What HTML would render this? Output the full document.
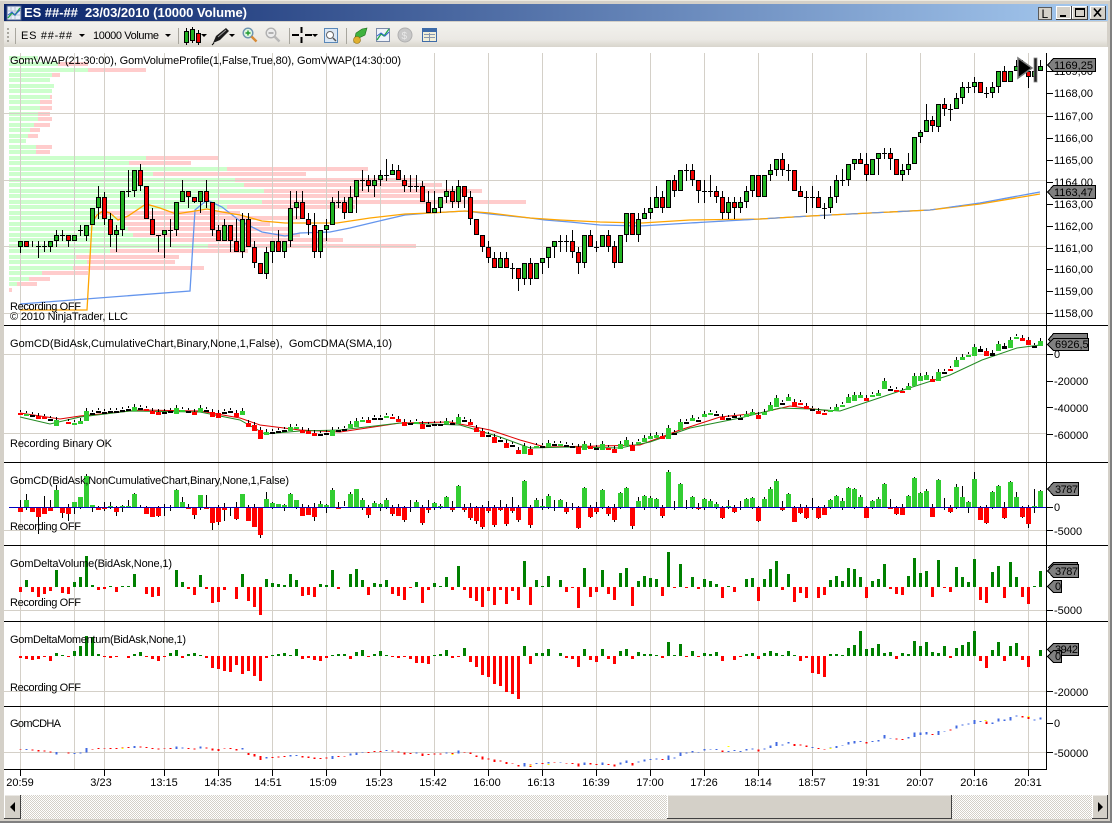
<!DOCTYPE html>
<html><head><meta charset="utf-8"><title>ES ##-## 23/03/2010 (10000 Volume)</title>
<style>
html,body{margin:0;padding:0;background:#D4D0C8;overflow:hidden}
svg{display:block}
text{font-family:"Liberation Sans",sans-serif;font-size:11px;fill:#000}
.c{shape-rendering:crispEdges}
</style></head><body>
<svg width="1112" height="823" viewBox="0 0 1112 823" xmlns="http://www.w3.org/2000/svg">
<defs>
<linearGradient id="tg" x1="0" x2="1" y1="0" y2="0"><stop offset="0" stop-color="#0A246A"/><stop offset="1" stop-color="#A6CAF0"/></linearGradient>
<linearGradient id="tb" x1="0" x2="0" y1="0" y2="1"><stop offset="0" stop-color="#F3F2EE"/><stop offset=".7" stop-color="#EBE9E4"/><stop offset="1" stop-color="#D8D5CC"/></linearGradient>
<pattern id="ht" width="2" height="2" patternUnits="userSpaceOnUse"><rect width="2" height="2" fill="#fff"/><rect width="1" height="1" fill="#D4D0C8"/><rect x="1" y="1" width="1" height="1" fill="#D4D0C8"/></pattern>
<path id="dg" d="M26.5 0v-7M56.5 0v-17M74.5 0v-5M80.5 0v-10M86.5 0v-31M92.5 0v-2M110.5 0v-1M122.5 0v-1M128.5 0v-1M134.5 0v-13M176.5 0v-17M182.5 0v-5M200.5 0v-12M242.5 0v-13M266.5 0v-8M272.5 0v-4M278.5 0v-3M284.5 0v-2M290.5 0v-13M296.5 0v-7M320.5 0v-3M326.5 0v-2M332.5 0v-17M350.5 0v-13M356.5 0v-18M362.5 0v-7M374.5 0v-4M380.5 0v-3M386.5 0v-7M416.5 0v-5M434.5 0v-4M440.5 0v-1M446.5 0v-10M458.5 0v-21M524.5 0v-26M536.5 0v-7M542.5 0v-1M548.5 0v-11M560.5 0v-7M584.5 0v-19M602.5 0v-17M620.5 0v-14M626.5 0v-19M638.5 0v-6M644.5 0v-11M650.5 0v-9M656.5 0v-8M668.5 0v-35M680.5 0v-23M692.5 0v-10M704.5 0v-8M710.5 0v-6M716.5 0v-3M728.5 0v-1M746.5 0v-8M752.5 0v-9M764.5 0v-8M770.5 0v-18M776.5 0v-26M788.5 0v-13M830.5 0v-7M836.5 0v-11M842.5 0v-6M848.5 0v-19M854.5 0v-18M860.5 0v-10M872.5 0v-6M878.5 0v-8M884.5 0v-23M908.5 0v-11M914.5 0v-29M920.5 0v-14M926.5 0v-16M938.5 0v-27M956.5 0v-20M962.5 0v-10M968.5 0v-5M974.5 0v-28M992.5 0v-15M998.5 0v-21M1010.5 0v-25M1016.5 0v-10M1034.5 0v-1M1040.5 0v-16"/>
<path id="dr" d="M20.5 0v5M32.5 0v5M38.5 0v10M44.5 0v7M50.5 0v4M62.5 0v6M68.5 0v7M98.5 0v3M104.5 0v2M116.5 0v5M146.5 0v7M152.5 0v10M158.5 0v9M188.5 0v2M194.5 0v8M206.5 0v2M212.5 0v16M218.5 0v15M224.5 0v3M236.5 0v12M248.5 0v14M254.5 0v20M260.5 0v28M302.5 0v9M308.5 0v8M314.5 0v10M338.5 0v2M368.5 0v8M392.5 0v7M398.5 0v9M404.5 0v13M410.5 0v1M422.5 0v16M428.5 0v3M452.5 0v3M464.5 0v3M470.5 0v11M476.5 0v14M482.5 0v20M488.5 0v4M494.5 0v18M500.5 0v3M506.5 0v17M512.5 0v4M518.5 0v13M530.5 0v18M566.5 0v5M572.5 0v1M578.5 0v21M590.5 0v10M596.5 0v5M608.5 0v7M614.5 0v13M632.5 0v19M662.5 0v9M674.5 0v1M686.5 0v1M698.5 0v2M722.5 0v11M734.5 0v5M758.5 0v14M782.5 0v3M794.5 0v15M800.5 0v6M806.5 0v11M818.5 0v11M824.5 0v8M866.5 0v11M890.5 0v2M896.5 0v7M902.5 0v8M932.5 0v10M944.5 0v1M950.5 0v5M980.5 0v13M986.5 0v16M1004.5 0v11M1022.5 0v10M1028.5 0v17"/>
<path id="cg" d="M26.5 414v2M56.5 420v6M74.5 423v2M80.5 421v3M86.5 411v10M134.5 407v4M176.5 408v6M182.5 410v2M200.5 408v4M242.5 411v4M266.5 432v3M290.5 427v4M296.5 427v2M332.5 430v6M350.5 424v4M356.5 421v6M362.5 420v2M386.5 416v2M416.5 422v2M446.5 421v3M458.5 417v7M524.5 446v8M536.5 446v2M548.5 443v4M560.5 444v2M584.5 444v6M602.5 444v6M620.5 444v5M626.5 440v6M638.5 442v2M644.5 438v4M650.5 436v3M656.5 435v3M668.5 428v11M680.5 422v8M692.5 418v3M704.5 414v3M710.5 413v2M746.5 414v3M752.5 412v3M764.5 412v3M770.5 405v6M776.5 398v9M788.5 397v4M830.5 410v2M836.5 407v4M842.5 405v2M848.5 397v6M854.5 395v6M860.5 395v3M872.5 395v2M878.5 393v3M884.5 381v8M908.5 386v4M914.5 376v10M920.5 376v5M926.5 375v5M938.5 372v9M956.5 360v7M962.5 357v3M968.5 355v2M974.5 347v9M998.5 344v7M1010.5 340v8M1016.5 337v2M1040.5 341v5"/>
<path id="cr" d="M20.5 413v2M38.5 416v3M44.5 417v2M68.5 422v2M146.5 409v2M152.5 411v3M158.5 412v3M194.5 412v3M212.5 412v5M218.5 413v5M236.5 413v4M248.5 423v4M254.5 425v6M260.5 430v9M302.5 430v3M308.5 431v3M314.5 433v3M368.5 420v3M392.5 417v2M398.5 419v3M404.5 422v4M422.5 424v5M470.5 422v3M476.5 428v4M482.5 431v6M494.5 437v6M506.5 443v5M518.5 450v4M530.5 449v6M578.5 447v7M590.5 446v3M608.5 448v2M614.5 449v4M632.5 445v6M662.5 436v3M722.5 417v3M758.5 415v4M794.5 402v5M800.5 403v2M806.5 406v3M818.5 411v3M824.5 413v2M866.5 398v3M896.5 390v2M902.5 391v2M932.5 379v3M950.5 369v2M986.5 351v5M1022.5 338v3M1028.5 340v5"/>
<path id="ck1" d="M32.5 415v2M50.5 419v2M92.5 413v2M98.5 411v2M104.5 412v2M110.5 411v2M116.5 411v2M122.5 410v2M128.5 409v2M140.5 408v2M164.5 412v2M170.5 411v2M188.5 411v2M206.5 410v2M224.5 412v2M230.5 411v2M272.5 432v2M278.5 431v2M284.5 430v2M320.5 434v2M326.5 433v2M338.5 430v2M344.5 429v2M374.5 418v2M380.5 418v2M410.5 423v2M428.5 425v2M434.5 424v2M440.5 424v2M452.5 423v2M464.5 420v2M488.5 435v2M500.5 440v2M512.5 445v2M542.5 446v2M554.5 444v2M566.5 445v2M572.5 446v2M596.5 448v2"/>
<path id="ck2" d="M674.5 433v2M686.5 422v2M698.5 420v2M716.5 414v2M728.5 418v2M734.5 416v2M740.5 418v2M782.5 403v2M812.5 409v2M890.5 389v2M944.5 372v2M980.5 349v3M992.5 353v3M1004.5 346v3M1034.5 346v2"/>
</defs>

<rect width="1112" height="823" fill="#D4D0C8"/>
<rect x="0" y="0" width="1112" height="1" fill="#ECE9E0"/>
<rect x="1110" y="0" width="2" height="823" fill="#808080"/>
<rect x="0" y="821" width="1112" height="2" fill="#808080"/>
<rect x="4" y="4" width="1104" height="17" fill="url(#tg)"/>

<!-- title icon -->
<g class="c"><rect x="7" y="6" width="14" height="14" fill="#E8EEF8" stroke="#4A5E8A"/><path d="M11 7v12M15 7v12M8 11h12M8 15h12" stroke="#B5C0D5"/></g>
<path d="M8 18l4-5 3 2 5-7" fill="none" stroke="#22A84A" stroke-width="1.4"/><path d="M8 15l4-3 3 3 5-5" fill="none" stroke="#3060D0"/>
<text x="24" y="17" xml:space="preserve" textLength="223" lengthAdjust="spacing" style="font-size:13px;font-weight:bold;fill:#fff">ES ##-##  23/03/2010 (10000 Volume)</text>

<!-- window buttons -->
<g class="c">
<rect x="1038.5" y="7.5" width="13" height="12" fill="#D4D0C8" stroke="#5A5A5A"/>
<rect x="1056" y="6" width="15" height="13" fill="#D4D0C8" stroke="#fff" stroke-width="0"/><path d="M1056.5 18.5v-12h14M1070.5 6.5v12h-14" fill="none" stroke="#fff"/><path d="M1071.5 6v13.5h-15.5" fill="none" stroke="#404040"/>
<rect x="1060" y="15" width="6" height="2" fill="#000"/>
<rect x="1072" y="6" width="15" height="13" fill="#D4D0C8"/><path d="M1072.5 18.5v-12h14" fill="none" stroke="#fff"/><path d="M1087.5 6v13.5h-15.5" fill="none" stroke="#404040"/>
<path d="M1075.5 8.5h9v8h-9zM1075 9.5h10" fill="none" stroke="#000"/>
<rect x="1090" y="6" width="15" height="13" fill="#D4D0C8"/><path d="M1090.5 18.5v-12h14" fill="none" stroke="#fff"/><path d="M1105.5 6v13.5h-15.5" fill="none" stroke="#404040"/>
</g>
<path d="M1094 8.5l7 8M1101 8.5l-7 8" stroke="#000" stroke-width="1.7"/>
<text x="1041.5" y="18" style="font-size:12px">L</text>

<!-- toolbar -->
<rect x="4" y="22" width="1103" height="25" fill="url(#tb)"/>
<g fill="#A8A69E" class="c"><rect x="7" y="28" width="2" height="2"/><rect x="7" y="32" width="2" height="2"/><rect x="7" y="36" width="2" height="2"/><rect x="7" y="40" width="2" height="2"/></g>
<path class="c" d="M15.5 28v16M178.5 28v16M289.5 28v16M346.5 28v16" stroke="#A8A69E"/>
<text x="21" y="39" textLength="51" lengthAdjust="spacing">ES ##-##</text>
<path d="M79 34h6l-3 3z" fill="#000"/>
<text x="93" y="39" textLength="66" lengthAdjust="spacing">10000 Volume</text>
<path d="M165 34h6l-3 3z" fill="#000"/>
<g class="c" stroke="#000"><path d="M186.5 28v17M192.5 27v16M198.5 30v15"/><rect x="184.5" y="31.5" width="4" height="11" fill="#20B020"/><rect x="190.5" y="29.5" width="4" height="11" fill="#20B020"/><rect x="196.5" y="33.5" width="4" height="9" fill="#E80000"/></g>
<path d="M201 34h6l-3 3z" fill="#000"/>
<path d="M213 43l3-7 10-8 3 3-9 9z" fill="#1a1a1a"/><path d="M214 43l-2 2" stroke="#000"/><path d="M218 37l8-7" stroke="#999"/>
<path d="M229 34h6l-3 3z" fill="#000"/>
<circle cx="248" cy="33" r="4.8" fill="#DFF5E0" stroke="#6C93B0" stroke-width="1.4"/><path d="M251.500 36.500l5 5" stroke="#D88A35" stroke-width="2.5"/><path d="M245.500 33h5M248 30.500v5" stroke="#1E9A30" stroke-width="1.4"/>
<circle cx="271" cy="33" r="4.8" fill="#ECECEC" stroke="#B0B0B0" stroke-width="1.4"/><path d="M274.500 36.500l5 5" stroke="#B8B8B8" stroke-width="2.5"/><path d="M268.500 33h5" stroke="#999" stroke-width="1.4"/>
<path class="c" d="M292 35h7M305 35h7M301.500 27v6M301.500 37v6" stroke="#000" stroke-width="2"/>
<path d="M312 34h6l-3 3z" fill="#000"/>
<rect x="324.500" y="28.500" width="13" height="14" fill="#DCE8F5" stroke="#5A88B8"/><circle cx="330" cy="35" r="3.500" fill="#fff" stroke="#666"/><path d="M333 38l3 3" stroke="#555" stroke-width="1.500"/>
<path d="M354 42l2-9 6-4 5-1-2 7-6 3z" fill="#3FB23F" stroke="#1E6B1E" stroke-width=".6"/><circle cx="357" cy="40" r="3.500" fill="#E0B030" stroke="#8A6A10" stroke-width=".6"/>
<rect x="376.500" y="28.500" width="13" height="13" fill="#EEF2FA" stroke="#7A8AA8"/><path d="M377 40l4-6 3 2 5-7" fill="none" stroke="#22A84A" stroke-width="1.300"/><path d="M377 36l4-3 4 3 4-4" fill="none" stroke="#3060D0"/>
<circle cx="405" cy="35" r="7" fill="#C8C8C8" stroke="#B0B0B0"/><text x="401.500" y="39" style="font-size:10px;fill:#E8E8E8">$</text>
<g class="c"><rect x="422.500" y="28.500" width="14" height="13" fill="#F2EFD8" stroke="#3E6BA8"/><rect x="423" y="29" width="13" height="3" fill="#3E6BA8"/><path d="M424 34.500h11M424 37.500h11M429.500 33v8" stroke="#8898B0"/></g>

<!-- chart bg -->
<rect x="4" y="47" width="1104" height="748" fill="#fff"/>

<!-- profile -->
<g class="c" stroke-width="4" fill="none">
<path stroke="#CCFFCC" d="M9 58H38M9 64H58M9 70H88M9 75H52M9 80H50M9 86H54M9 91H52M9 97H50M9 102H40M9 108H40M9 114H38M9 119H38M9 125H34M9 130H30M9 136H28M9 141H26M9 147H36M9 152H36M9 158H146M9 163H129M9 169H227M9 174H153M9 180H235M9 185H244M9 191H264M9 196H220M9 202H262M9 207H227M9 213H100M9 218H117M9 224H123M9 229H128M9 235H133M9 240H170M9 246H208M9 251H110M9 257H76M9 262H87M9 268H73M9 273H42M9 279H29M9 284H17"/>
<path stroke="#FFCCCC" d="M58 64H88M88 70H146M52 75H60M50 97H52M40 102H52M40 108H52M38 114H50M38 119H52M34 125H50M30 130H40M28 136H38M36 147H52M36 152H50M146 158H219M129 163H191M227 169H368M153 174H306M235 180H417M244 185H442M264 191H482M220 196H420M262 202H526M227 207H355M100 213H240M117 218H300M123 224H270M128 229H290M133 235H300M170 240H343M208 246H416M110 251H248M76 257H179M87 262H175M73 268H204M42 273H88M29 279H50M17 284H37M9 290H12"/>
</g>

<!-- grid -->
<g class="c" stroke="#D4D0C8" fill="none">
<path d="M20.500 53V769M74.500 53V769M164.500 53V769M218.500 53V769M272.500 53V769M326.500 53V769M380.500 53V769M434.500 53V769M488.500 53V769M542.500 53V769M596.500 53V769M650.500 53V769M704.500 53V769M758.500 53V769M812.500 53V769M866.500 53V769M920.500 53V769M974.500 53V769M1028.500 53V769"/>
<path d="M4 113.500H1046M4 180.500H1046M4 246.500H1046M4 313.500H1046M4 354.500H1046M4 433.500H1046M4 530.500H1046M4 610.500H1046M4 691.500H1046M4 752.500H1046"/>
<path d="M104.500 53V769"/>
</g>

<!-- VWAP -->
<path fill="none" stroke="#6495ED" stroke-width="1.300" d="M20 304L190 291L195 210L207 200L222 207L240 221L262 232L285 236L300 233L330 232L350 228L375 222L405 215L430 213L465 211L490 214L530 218L545 220L570 222L600 225L640 226L690 223L760 219L810 216L870 213L930 210L980 203L1040 192"/>
<path fill="none" stroke="#FFA500" stroke-width="1.300" d="M20 310L87 310L92 223L97 215L103 211L110 213L118 220L128 216L146 204L160 208L176 214L195 211L207 209L222 212L240 215L262 221L285 223L300 223L337 223L370 218L405 214L430 213L465 211L490 213L530 218L560 220L600 222L642 223L690 220L760 219L810 216L870 213L930 210L980 204L1040 194"/>
<path fill="none" stroke="#6495ED" stroke-width="1" stroke-dasharray="12 14" d="M690 223L760 219L810 216L870 213L930 210L980 203L1040 192"/>

<!-- candles wicks -->
<path class="c" stroke="#000" fill="none" d="M20.500 241V253M26.500 241V247M32.500 241V247M18 246.500h5M38.500 241V258M36 246.500h5M44.500 241V252M42 246.500h5M50.500 241V252M56.500 230V247M62.500 230V241M60 235.500h5M68.500 235V247M74.500 235V241M80.500 225V236M78 230.500h5M86.500 225V241M92.500 208V225M98.500 186V219M104.500 192V225M110.500 213V247M116.500 225V252M122.500 191V236M128.500 170V197M126 191.500h5M134.500 170V197M140.500 164V191M146.500 186V219M152.500 208V235M158.500 235V252M156 235.500h5M164.500 230V258M170.500 219V247M168 230.500h5M176.500 202V236M182.500 180V202M188.500 191V208M194.500 197V203M200.500 191V213M206.500 180V208M212.500 202V236M218.500 225V241M224.500 219V241M230.500 225V252M236.500 219V252M242.500 213V258M248.500 213V247M254.500 241V268M260.500 263V274M266.500 247V279M272.500 241V263M278.500 230V252M284.500 241V258M290.500 191V247M296.500 191V219M302.500 191V219M308.500 213V235M314.500 213V258M320.500 230V258M326.500 219V241M332.500 197V225M338.500 191V208M336 202.500h5M344.500 197V219M350.500 186V213M356.500 180V213M362.500 170V191M360 180.500h5M368.500 175V192M374.500 175V197M380.500 170V186M386.500 159V181M384 175.500h5M392.500 164V175M398.500 165V180M404.500 175V192M410.500 175V192M408 186.500h5M416.500 175V192M414 186.500h5M422.500 181V202M428.500 191V213M434.500 191V213M440.500 197V213M446.500 180V203M452.500 186V208M458.500 180V208M464.500 186V208M470.500 191V225M476.500 219V235M482.500 235V252M488.500 241V263M494.500 252V268M500.500 252V268M506.500 252V268M512.500 263V279M510 268.500h5M518.500 268V291M524.500 263V285M530.500 258V285M536.500 263V279M542.500 258V274M548.500 247V268M554.500 241V258M560.500 235V252M558 241.500h5M566.500 235V252M564 241.500h5M572.500 230V258M578.500 247V274M584.500 235V268M590.500 230V247M596.500 241V252M594 247.500h5M602.500 235V247M608.500 230V252M614.500 241V268M620.500 235V263M626.500 213V242M632.500 213V235M638.500 213V242M644.500 208V219M650.500 197V219M656.500 186V208M662.500 191V213M668.500 180V208M674.500 175V197M680.500 170V191M686.500 164V181M684 170.500h5M692.500 164V186M698.500 180V203M704.500 180V203M702 191.500h5M710.500 175V197M708 191.500h5M716.500 186V203M722.500 191V219M728.500 197V219M734.500 197V219M740.500 197V213M746.500 186V208M752.500 175V197M758.500 175V197M764.500 175V197M770.500 164V181M776.500 159V176M782.500 153V176M788.500 164V181M786 170.500h5M794.500 170V191M800.500 186V197M806.500 191V213M804 197.500h5M812.500 186V208M810 197.500h5M818.500 191V208M824.500 203V219M822 208.500h5M830.500 186V213M836.500 175V203M842.500 169V186M840 180.500h5M848.500 164V186M854.500 159V170M860.500 153V164M866.500 153V181M872.500 159V175M878.500 153V175M884.500 148V159M882 153.500h5M890.500 148V170M896.500 159V175M902.500 164V181M908.500 153V175M914.500 137V164M920.500 130V143M926.500 104V132M932.500 116V132M938.500 104V132M944.500 98V116M950.500 104V121M948 109.500h5M956.500 93V109M962.500 82V104M968.500 82V93M966 87.500h5M974.500 77V93M980.500 82V93M986.500 87V98M984 93.500h5M992.500 82V98M998.500 71V93M1004.500 66V82M1010.500 71V82M1016.500 60V71M1022.500 60V74M1028.500 66V88M1034.500 58V82M1040.500 60V71"/>
<path class="c" fill="#22B422" stroke="#000" d="M18.500 241.500h4v5h-4zM48.500 241.500h4v5h-4zM54.500 235.500h4v5h-4zM72.500 235.500h4v5h-4zM84.500 225.500h4v10h-4zM90.500 208.500h4v16h-4zM96.500 197.500h4v10h-4zM114.500 230.500h4v4h-4zM120.500 191.500h4v38h-4zM132.500 170.500h4v20h-4zM162.500 230.500h4v4h-4zM174.500 202.500h4v27h-4zM180.500 191.500h4v10h-4zM198.500 191.500h4v10h-4zM222.500 225.500h4v15h-4zM240.500 219.500h4v32h-4zM264.500 252.500h4v21h-4zM270.500 241.500h4v10h-4zM282.500 241.500h4v10h-4zM288.500 208.500h4v32h-4zM294.500 202.500h4v5h-4zM318.500 230.500h4v21h-4zM324.500 225.500h4v4h-4zM330.500 202.500h4v22h-4zM348.500 197.500h4v15h-4zM354.500 180.500h4v16h-4zM372.500 180.500h4v5h-4zM378.500 175.500h4v4h-4zM390.500 170.500h4v4h-4zM432.500 208.500h4v4h-4zM438.500 197.500h4v10h-4zM444.500 191.500h4v5h-4zM456.500 186.500h4v15h-4zM498.500 258.500h4v9h-4zM522.500 263.500h4v15h-4zM534.500 263.500h4v15h-4zM540.500 258.500h4v4h-4zM546.500 247.500h4v10h-4zM552.500 241.500h4v5h-4zM582.500 235.500h4v27h-4zM600.500 235.500h4v11h-4zM618.500 235.500h4v27h-4zM624.500 213.500h4v21h-4zM636.500 219.500h4v15h-4zM642.500 213.500h4v5h-4zM648.500 208.500h4v4h-4zM654.500 197.500h4v10h-4zM666.500 180.500h4v27h-4zM678.500 170.500h4v20h-4zM726.500 202.500h4v10h-4zM738.500 202.500h4v5h-4zM744.500 191.500h4v10h-4zM750.500 175.500h4v15h-4zM762.500 175.500h4v21h-4zM768.500 170.500h4v4h-4zM774.500 159.500h4v10h-4zM828.500 197.500h4v10h-4zM834.500 180.500h4v16h-4zM846.500 164.500h4v15h-4zM852.500 159.500h4v4h-4zM870.500 159.500h4v15h-4zM876.500 153.500h4v5h-4zM900.500 170.500h4v4h-4zM906.500 164.500h4v5h-4zM912.500 137.500h4v26h-4zM918.500 132.500h4v4h-4zM924.500 120.500h4v11h-4zM936.500 104.500h4v22h-4zM954.500 98.500h4v10h-4zM960.500 87.500h4v10h-4zM972.500 82.500h4v4h-4zM990.500 87.500h4v5h-4zM996.500 71.500h4v15h-4zM1008.500 71.500h4v10h-4zM1014.500 66.500h4v4h-4zM1032.500 71.500h4v5h-4zM1038.500 66.500h4v4h-4z"/>
<path class="c" fill="#F00000" stroke="#000" d="M24.500 241.500h4v5h-4zM66.500 235.500h4v5h-4zM102.500 197.500h4v21h-4zM108.500 219.500h4v15h-4zM138.500 170.500h4v15h-4zM144.500 186.500h4v32h-4zM150.500 219.500h4v15h-4zM186.500 191.500h4v5h-4zM192.500 197.500h4v4h-4zM204.500 191.500h4v10h-4zM210.500 202.500h4v27h-4zM216.500 230.500h4v10h-4zM228.500 225.500h4v15h-4zM234.500 241.500h4v10h-4zM246.500 219.500h4v27h-4zM252.500 247.500h4v15h-4zM258.500 263.500h4v10h-4zM276.500 241.500h4v10h-4zM300.500 202.500h4v16h-4zM306.500 219.500h4v5h-4zM312.500 225.500h4v26h-4zM342.500 202.500h4v10h-4zM366.500 180.500h4v5h-4zM396.500 170.500h4v9h-4zM402.500 180.500h4v5h-4zM420.500 186.500h4v15h-4zM426.500 202.500h4v10h-4zM450.500 191.500h4v10h-4zM462.500 186.500h4v10h-4zM468.500 197.500h4v21h-4zM474.500 219.500h4v15h-4zM480.500 235.500h4v11h-4zM486.500 247.500h4v10h-4zM492.500 258.500h4v9h-4zM504.500 258.500h4v9h-4zM516.500 268.500h4v10h-4zM528.500 263.500h4v15h-4zM570.500 241.500h4v10h-4zM576.500 252.500h4v10h-4zM588.500 235.500h4v11h-4zM606.500 235.500h4v11h-4zM612.500 246.500h4v16h-4zM630.500 213.500h4v21h-4zM660.500 197.500h4v10h-4zM672.500 180.500h4v10h-4zM690.500 170.500h4v9h-4zM696.500 180.500h4v10h-4zM714.500 191.500h4v5h-4zM720.500 197.500h4v15h-4zM732.500 202.500h4v5h-4zM756.500 175.500h4v21h-4zM780.500 159.500h4v10h-4zM792.500 170.500h4v20h-4zM798.500 191.500h4v5h-4zM816.500 197.500h4v10h-4zM858.500 159.500h4v4h-4zM864.500 164.500h4v10h-4zM888.500 153.500h4v5h-4zM894.500 159.500h4v15h-4zM930.500 120.500h4v5h-4zM942.500 104.500h4v4h-4zM978.500 82.500h4v10h-4zM1002.500 71.500h4v10h-4zM1026.500 71.500h4v5h-4z"/>
<!-- arrow and marker -->
<path d="M1018 58L1032 68L1018 78Z" fill="#000" stroke="#777" stroke-width="1.500"/>
<rect x="1034" y="58" width="3" height="24" fill="#222" stroke="#888" stroke-width=".8"/>

<!-- panel 2 -->
<path fill="none" stroke="#E00000" d="M20 413L40 416L60 419L80 416L100 414L140 410L200 411L240 418L260 425L300 430L340 432L400 423L450 422L490 430L520 440L545 447L600 446L640 445L680 430L720 417L760 413L790 406L830 411"/>
<path fill="none" stroke="#228B22" d="M20 417L50 424L80 417L130 411L200 412L240 420L265 434L300 431L340 430L400 423L460 425L500 437L530 448L570 447L620 448L650 442L690 428L740 418L780 408L810 409L840 411L870 401L900 391L950 375L982 360L1017 348L1040 345"/>
<g class="c" stroke="#000" fill="none" transform="translate(0,-3)"><use href="#cg"/><use href="#cr"/><use href="#ck1"/><use href="#ck2"/></g>
<g class="c" fill="none" stroke-width="5"><use href="#cg" stroke="#32CD32"/><use href="#cr" stroke="#FF0000"/><use href="#ck1" stroke="#000"/><use href="#ck2" stroke="#000"/></g>

<!-- panel 3 -->
<path class="c" d="M9 507.500H1046" stroke="#0000C0"/>
<g class="c" transform="translate(0,507)" fill="none">
<path stroke="#000" d="M20.500-7v12M26.500-13v16M32.500 0v5M38.500 0v27M44.500-11v18M50.500-7v11M56.500-22v22M62.500 0v11M68.500-3v17M74.500-5v12M80.500-10v12M86.500-33v33M92.500-2v7M98.500-1v4M104.500-5v9M110.500-5v7M116.500-1v10M122.500-2v7M128.500-7v7M134.500-14v14M140.500-2v3M146.500-1v8M152.500 0v10M158.500-1v11M164.500-3v12M170.500-2v6M176.500-18v18M182.500-10v10M188.500-3v5M194.500 0v12M200.500-12v15M206.500-12v12M212.500 0v23M218.500-2v20M224.500-4v18M230.500 0v9M236.500-5v18M242.500-13v13M248.500-2v16M254.500-3v23M260.500 0v31M266.500-15v15M272.500-5v7M278.500-3v3M284.500-3v7M290.500-14v14M296.500-7v9M302.500-3v12M308.500-2v10M314.500-4v18M320.500-6v6M326.500-3v9M332.500-19v19M338.500-5v7M344.500-6v5M350.500-15v15M356.500-18v5M362.500-9v12M368.500-2v13M374.500-6v6M380.500-4v8M386.500-9v11M392.500-2v11M398.500-3v12M404.500-1v16M410.500-7v12M416.500-7v7M422.500-2v20M428.500-7v13M434.500-5v8M440.500-3v5M446.500-11v11M452.500-6v11M458.500-22v22M464.500-3v8M470.500-4v17M476.500-1v18M482.500-2v24M488.500-6v12M494.500-2v22M500.500-7v11M506.500-3v22M512.500-10v16M518.500-2v17M524.500-27v27M530.500-2v23M536.500-9v9M542.500-8v11M548.500-13v15M554.500-7v11M560.500-8v8M566.500-5v12M572.500-4v7M578.500-1v23M584.500-20v20M590.500-2v13M596.500-5v12M602.500-18v20M608.500-1v10M614.500-3v18M620.500-15v17M626.500-20v20M632.500 0v22M638.500-10v10M644.500-12v15M650.500-11v11M656.500-9v11M662.500-2v13M668.500-37v37M674.500-6v9M680.500-24v24M686.500-7v9M692.500-11v13M698.500-4v7M704.500-9v12M710.500-8v8M716.500-5v7M722.500-1v13M728.500-7v9M734.500-2v8M740.500-6v9M746.500-9v9M752.500-10v12M758.500-1v16M764.500-10v10M770.500-20v20M776.500-28v28M782.500-6v10M788.500-14v14M794.500-1v16M800.500-3v10M806.500-2v14M812.500-9v12M818.500-1v13M824.500-2v10M830.500-8v10M836.500-12v12M842.500-9v12M848.500-20v20M854.500-19v21M860.500-12v12M866.500-1v12M872.500-7v9M878.500-10v10M884.500-24v24M890.500-8v10M896.500-1v9M902.500-3v11M908.500-12v12M914.500-30v30M920.500-15v15M926.500-18v18M932.500-3v12M938.500-28v28M944.500-9v12M950.500-2v8M956.500-23v25M962.500-21v21M968.500-6v12M974.500-35v35M980.500-1v14M986.500-2v19M992.500-16v18M998.500-22v22M1004.500-5v17M1010.500-26v26M1016.500-15v15M1022.500-1v12M1028.500-2v23M1034.500-18v24M1040.500-17v17"/>
<use href="#dg" stroke="#32CD32" stroke-width="5"/><use href="#dr" stroke="#FF0000" stroke-width="5"/>
</g>
<path class="c" d="M9 507.500H1046" stroke="#0000C0" opacity=".9"/>

<!-- panel 4 -->
<g class="c" transform="translate(0,587)" fill="none" stroke-width="3"><use href="#dg" stroke="#008000"/><use href="#dr" stroke="#FF0000"/></g>

<!-- panel 5 -->
<g class="c" transform="translate(0,656)" fill="none" stroke-width="3">
<path stroke="#008000" d="M56.500 0v-3M62.500 0v-1M74.500 0v-5M80.500 0v-10M86.500 0v-20M92.500 0v-19M98.500 0v-2M134.500 0v-2M140.500 0v-4M170.500 0v-3M176.500 0v-6M188.500 0v-2M194.500 0v-3M200.500 0v-1M272.500 0v-1M278.500 0v-2M284.500 0v-3M290.500 0v-1M296.500 0v-7M332.500 0v-1M338.500 0v-2M344.500 0v-2M356.500 0v-4M362.500 0v-6M374.500 0v-2M380.500 0v-5M386.500 0v-1M434.500 0v-1M440.500 0v-2M446.500 0v-6M464.500 0v-8M524.500 0v-10M536.500 0v-3M542.500 0v-3M548.500 0v-7M560.500 0v-3M584.500 0v-7M602.500 0v-7M620.500 0v-5M626.500 0v-7M638.500 0v-4M644.500 0v-2M650.500 0v-2M656.500 0v-1M668.500 0v-14M674.500 0v-1M680.500 0v-12M692.500 0v-5M704.500 0v-3M710.500 0v-2M716.500 0v-4M746.500 0v-2M752.500 0v-3M764.500 0v-3M770.500 0v-5M776.500 0v-3M782.500 0v-1M788.500 0v-5M794.500 0v-1M830.500 0v-2M836.500 0v-2M842.500 0v-1M848.500 0v-8M854.500 0v-11M860.500 0v-25M866.500 0v-7M872.500 0v-8M878.500 0v-12M884.500 0v-3M890.500 0v-4M902.500 0v-3M908.500 0v-2M914.500 0v-15M920.500 0v-10M926.500 0v-14M932.500 0v-4M938.500 0v-3M944.500 0v-10M956.500 0v-8M962.500 0v-11M968.500 0v-14M974.500 0v-25M992.500 0v-6M998.500 0v-14M1010.500 0v-10M1016.500 0v-13M1040.500 0v-6"/>
<path stroke="#FF0000" d="M20.500 0v2M26.500 0v3M32.500 0v4M38.500 0v3M44.500 0v1M50.500 0v5M68.500 0v1M104.500 0v1M110.500 0v2M116.500 0v1M128.500 0v2M146.500 0v1M152.500 0v3M158.500 0v5M164.500 0v1M182.500 0v2M206.500 0v2M212.500 0v12M218.500 0v13M224.500 0v15M230.500 0v16M236.500 0v9M242.500 0v18M248.500 0v15M254.500 0v20M260.500 0v25M266.500 0v2M302.500 0v3M308.500 0v2M314.500 0v4M320.500 0v5M326.500 0v2M350.500 0v3M368.500 0v1M392.500 0v1M398.500 0v2M404.500 0v1M410.500 0v3M416.500 0v7M422.500 0v7M428.500 0v8M452.500 0v2M458.500 0v1M470.500 0v6M476.500 0v11M482.500 0v19M488.500 0v21M494.500 0v28M500.500 0v30M506.500 0v36M512.500 0v38M518.500 0v43M530.500 0v8M566.500 0v2M572.500 0v3M578.500 0v11M590.500 0v4M596.500 0v6M608.500 0v3M614.500 0v8M632.500 0v3M662.500 0v2M686.500 0v1M698.500 0v1M722.500 0v5M734.500 0v4M740.500 0v1M758.500 0v3M800.500 0v5M806.500 0v2M812.500 0v17M818.500 0v18M824.500 0v21M896.500 0v3M950.500 0v2M980.500 0v5M986.500 0v12M1004.500 0v5M1022.500 0v4M1028.500 0v11"/>
</g>

<!-- panel 6 -->
<g class="c" fill="none" stroke-width="2.400" transform="matrix(1 0 0 .437 0 568.300)">
<use href="#cg" stroke="#4169E1"/><use href="#cr" stroke="#FF0000"/><use href="#ck1" stroke="#FF0000"/><use href="#ck2" stroke="#4169E1"/>
</g>
<path class="c" fill="none" stroke="#FFFF00" stroke-width="2.400" d="M122.500 748v1M452.500 754v1M530.500 765v1M548.500 764v1M728.500 746v1M986 721h0M985.500 720v1M1028.500 716v1M830.500 748v1"/>

<!-- frame lines -->
<g class="c" stroke="#000" fill="none">
<path d="M1046.500 53V770M4 769.500H1047M4 325.500H1108M4 462.500H1108M4 545.500H1108M4 621.500H1108M4 706.500H1108"/>
<path d="M1047 93.500h6M1047 116.500h6M1047 138.500h6M1047 160.500h6M1047 182.500h6M1047 204.500h6M1047 226.500h6M1047 248.500h6M1047 269.500h6M1047 291.500h6M1047 313.500h6M1047 71.500h6M1047 354.500h6M1047 381.500h6M1047 407.500h6M1047 434.500h6M1047 507.500h6M1047 530.500h6M1047 610.500h6M1047 691.500h6M1047 723.500h6M1047 752.500h6"/>
<path d="M20.500 770v6M104.500 770v6M164.500 770v6M218.500 770v6M272.500 770v6M326.500 770v6M380.500 770v6M434.500 770v6M488.500 770v6M542.500 770v6M596.500 770v6M650.500 770v6M704.500 770v6M758.500 770v6M812.500 770v6M866.500 770v6M920.500 770v6M974.500 770v6M1028.500 770v6"/>
</g>

<!-- axis labels -->
<g>
<text x="1054" y="75">1169,00</text><text x="1054" y="97">1168,00</text><text x="1054" y="120">1167,00</text><text x="1054" y="142">1166,00</text><text x="1054" y="164">1165,00</text><text x="1054" y="186">1164,00</text><text x="1054" y="208">1163,00</text><text x="1054" y="230">1162,00</text><text x="1054" y="252">1161,00</text><text x="1054" y="273">1160,00</text><text x="1054" y="295">1159,00</text><text x="1054" y="317">1158,00</text>
<text x="1054" y="358">0</text><text x="1054" y="385">-20000</text><text x="1054" y="412">-40000</text><text x="1054" y="439">-60000</text>
<text x="1054" y="511">0</text><text x="1054" y="535">-5000</text>
<text x="1054" y="614">-5000</text>
<text x="1054" y="696">-20000</text>
<text x="1054" y="727">0</text><text x="1054" y="757">-50000</text>
</g>

<!-- tags -->
<g stroke="#000" fill="#808080" class="c">
<path d="M1053.500 333.500h34v11h-34l-5-5z"/>
<path d="M1053.500 338.500h35v12h-35l-6-6z"/>
<path d="M1053.500 58.500h42v13h-42l-6-6.500z"/>
<path d="M1053.500 185.500h42v13h-42l-6-6.500z"/>
<path d="M1053.500 482.500h25v13h-25l-6-6.500z"/>
<path d="M1053.500 562.500h24v10h-24l-5-5z"/>
<path d="M1053.500 564.500h25v13h-25l-6-6.500z"/>
<path d="M1053.500 580.500h8v12h-8l-6-6z"/>
<path d="M1053.500 643.500h25v12h-25l-6-6z"/>
<path d="M1053.500 650.500h8v12h-8l-6-6z"/>
</g>
<g>
<text x="1054" y="69">1169,25</text>
<text x="1054" y="196">1163,47</text>
<text x="1055" y="348">6926,5</text>
<text x="1055" y="493" textLength="23">3787</text>
<text x="1055" y="575" textLength="23">3787</text>
<text x="1055" y="590">0</text>
<text x="1055" y="653" textLength="23">3942</text>
<text x="1055" y="660">0</text>
</g>

<!-- panel labels -->
<g lengthAdjust="spacing">
<text x="10" y="64" textLength="391" lengthAdjust="spacing">GomVWAP(21:30:00), GomVolumeProfile(1,False,True,80), GomVWAP(14:30:00)</text>
<text x="10" y="310" textLength="71" lengthAdjust="spacing">Recording OFF</text>
<text x="10" y="320" textLength="118" lengthAdjust="spacing">© 2010 NinjaTrader, LLC</text>
<text x="10" y="347" xml:space="preserve" textLength="382" lengthAdjust="spacing">GomCD(BidAsk,CumulativeChart,Binary,None,1,False),  GomCDMA(SMA,10)</text>
<text x="10" y="447" textLength="102" lengthAdjust="spacing">Recording Binary OK</text>
<text x="10" y="484" textLength="279" lengthAdjust="spacing">GomCD(BidAsk,NonCumulativeChart,Binary,None,1,False)</text>
<text x="10" y="530" textLength="71" lengthAdjust="spacing">Recording OFF</text>
<text x="10" y="567" textLength="162" lengthAdjust="spacing">GomDeltaVolume(BidAsk,None,1)</text>
<text x="10" y="606" textLength="71" lengthAdjust="spacing">Recording OFF</text>
<text x="10" y="643" textLength="176" lengthAdjust="spacing">GomDeltaMomentum(BidAsk,None,1)</text>
<text x="10" y="691" textLength="71" lengthAdjust="spacing">Recording OFF</text>
<text x="10" y="727" textLength="51" lengthAdjust="spacing">GomCDHA</text>
</g>

<!-- time labels -->
<g text-anchor="middle">
<text x="20" y="786">20:59</text><text x="101" y="786">3/23</text><text x="164" y="786">13:15</text><text x="218" y="786">14:35</text><text x="268" y="786">14:51</text><text x="323" y="786">15:09</text><text x="379" y="786">15:23</text><text x="433" y="786">15:42</text><text x="487" y="786">16:00</text><text x="541" y="786">16:13</text><text x="596" y="786">16:39</text><text x="650" y="786">17:00</text><text x="704" y="786">17:26</text><text x="758" y="786">18:14</text><text x="812" y="786">18:57</text><text x="866" y="786">19:31</text><text x="920" y="786">20:07</text><text x="974" y="786">20:16</text><text x="1028" y="786">20:31</text>
</g>

<!-- scrollbar -->
<rect class="c" x="4" y="795" width="1104" height="24" fill="url(#ht)"/>
<g class="c">
<rect x="4" y="795" width="17" height="24" fill="#D4D0C8"/><path d="M4.500 818v-23h16" fill="none" stroke="#fff"/><path d="M20.500 795v23.500H4" fill="none" stroke="#404040"/>
<rect x="667" y="795" width="285" height="24" fill="#D4D0C8"/><path d="M667.500 818v-23h284" fill="none" stroke="#fff"/><path d="M951.500 795v23.500H667" fill="none" stroke="#404040"/>
<rect x="1092" y="795" width="16" height="24" fill="#D4D0C8"/><path d="M1092.500 818v-23h15" fill="none" stroke="#fff"/><path d="M1107.500 795v23.500H1092" fill="none" stroke="#404040"/>
</g>
<path d="M15 802v10l-5-5z" fill="#000"/>
<path d="M1098 802v10l5-5z" fill="#000"/>
</svg>
</body></html>
